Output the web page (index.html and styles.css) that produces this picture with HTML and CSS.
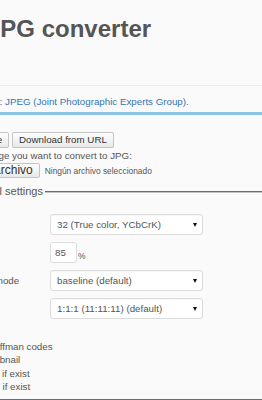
FILE: index.html
```html
<!DOCTYPE html>
<html lang="es">
<head>
    <meta charset="UTF-8">
    <meta name="viewport" content="width=device-width, initial-scale=1.0">
    <title>JPG converter</title>
    <link rel="stylesheet" href="styles.css">
</head>
<body>

    <div class="header">
        <h1 class="title">JPG converter</h1>
    </div>

    <p class="intro">Output format: JPEG (Joint Photographic Experts Group).</p>

    <div class="panel">
        <div class="tabs">
            <button class="btn">Upload file</button>
            <button class="btn">Download from URL</button>
        </div>
        <p class="hint">Select image you want to convert to JPG:</p>
        <div class="file">
            <span class="btn file-btn">Seleccionar archivo</span>
            <span class="file-name">Ningún archivo seleccionado</span>
        </div>

        <fieldset class="settings">
            <legend>Optional settings</legend>
            <div class="rows">
                <label class="label">Color:</label>
                <span class="select">
                    <select>
                        <option>32 (True color, YCbCrK)</option>
                    </select>
                </span>

                <label class="label">Quality:</label>
                <span class="quality">
                    <input class="num" type="text" value="85"><span class="unit">%</span>
                </span>

                <label class="label">Encode mode</label>
                <span class="select">
                    <select>
                        <option>baseline (default)</option>
                    </select>
                </span>

                <label class="label">Chroma:</label>
                <span class="select">
                    <select>
                        <option>1:1:1 (11:11:11) (default)</option>
                    </select>
                </span>
            </div>

            <div class="checks">
                <label class="check"><input type="checkbox">Optimize Huffman codes</label>
                <label class="check"><input type="checkbox">Create thumbnail</label>
                <label class="check check-meta"><input type="checkbox">Embed EXIF if exist</label>
                <label class="check check-meta"><input type="checkbox">Embed IPTC if exist</label>
            </div>
        </fieldset>
    </div>

</body>
</html>
```

FILE: styles.css
```css
body {
    font-family: 'Liberation Sans', Arial, sans-serif;
    font-size: 9.75px;
    background-color: #fafafa;
    color: #555;
    margin: 0;
    padding: 0;
    overflow: hidden;
}

.header {
    height: 86px;
    box-sizing: border-box;
    border-bottom: 1px solid #ececec;
    overflow: hidden;
}

.title {
    margin: 15px 0 0 -13px;
    font-size: 24px;
    line-height: 28px;
    font-weight: bold;
    color: #555;
    white-space: nowrap;
}

.intro {
    margin: 9px 0 0 -60px;
    line-height: 13px;
    color: #3276b1;
    white-space: nowrap;
}

.panel {
    margin-top: 4px;
    border-top: 3px solid #8dc3e6;
    padding-top: 17px;
}

.btn {
    display: inline-block;
    font-family: inherit;
    font-size: 9.75px;
    line-height: 12px;
    padding: 1px 6px;
    margin: 0;
    color: #333;
    background: linear-gradient(#fdfdfd, #e9e9e9);
    border: 1px solid #c4c4c4;
    border-radius: 2px;
    white-space: nowrap;
}

.tabs {
    display: flex;
    gap: 3px;
    margin-left: -51px;
}

.hint {
    margin: 1px 0 0 -47px;
    line-height: 13px;
    white-space: nowrap;
}

.file {
    display: flex;
    align-items: center;
    gap: 5px;
    margin: 1px 0 0 -79px;
    white-space: nowrap;
}

.file-btn {
    font-size: 12px;
    line-height: 13px;
    padding: 0 6px;
}

.file-name {
    font-size: 8.4px;
}

.settings {
    margin: 7px 0 0 -43px;
    padding: 0 0 6px 0;
    border: 2px groove #c0c0c0;
    border-right-width: 0;
    min-width: 0;
}

.settings legend {
    padding: 0 2px;
    font-size: 11px;
    line-height: 13px;
    white-space: nowrap;
}

.rows {
    display: grid;
    grid-template-columns: 91px 153px;
    row-gap: 7px;
    align-items: center;
    padding-top: 16px;
}

.label {
    white-space: nowrap;
    overflow: hidden;
}

.select {
    position: relative;
    display: block;
}

.select select {
    display: block;
    width: 153px;
    height: 21px;
    padding: 0 0 0 6px;
    appearance: none;
    -webkit-appearance: none;
    font-family: inherit;
    font-size: 9.75px;
    color: #555;
    background-color: #fff;
    border: 1px solid #dcdcdc;
    border-radius: 3px;
    box-shadow: inset 0 1px 1px rgba(0, 0, 0, 0.04);
}

.select::after {
    content: "";
    position: absolute;
    right: 6px;
    top: 9px;
    border-left: 2px solid transparent;
    border-right: 2px solid transparent;
    border-top: 4px solid #111;
}

.quality {
    display: flex;
    align-items: flex-end;
}

.num {
    box-sizing: border-box;
    width: 27px;
    height: 21px;
    padding: 0 0 0 4px;
    font-family: inherit;
    font-size: 9.75px;
    color: #555;
    background-color: #fff;
    border: 1px solid #dcdcdc;
    border-radius: 3px;
}

.unit {
    margin: 0 0 2px 1px;
    font-size: 8.5px;
}

.checks {
    margin: 21px 0 0 -34px;
}

.check {
    display: flex;
    align-items: center;
    height: 13.3px;
    white-space: nowrap;
}

.check-meta {
    margin-left: -2px;
}

.check input {
    width: 13px;
    height: 13px;
    margin: 0 4px 0 4px;
}
```
